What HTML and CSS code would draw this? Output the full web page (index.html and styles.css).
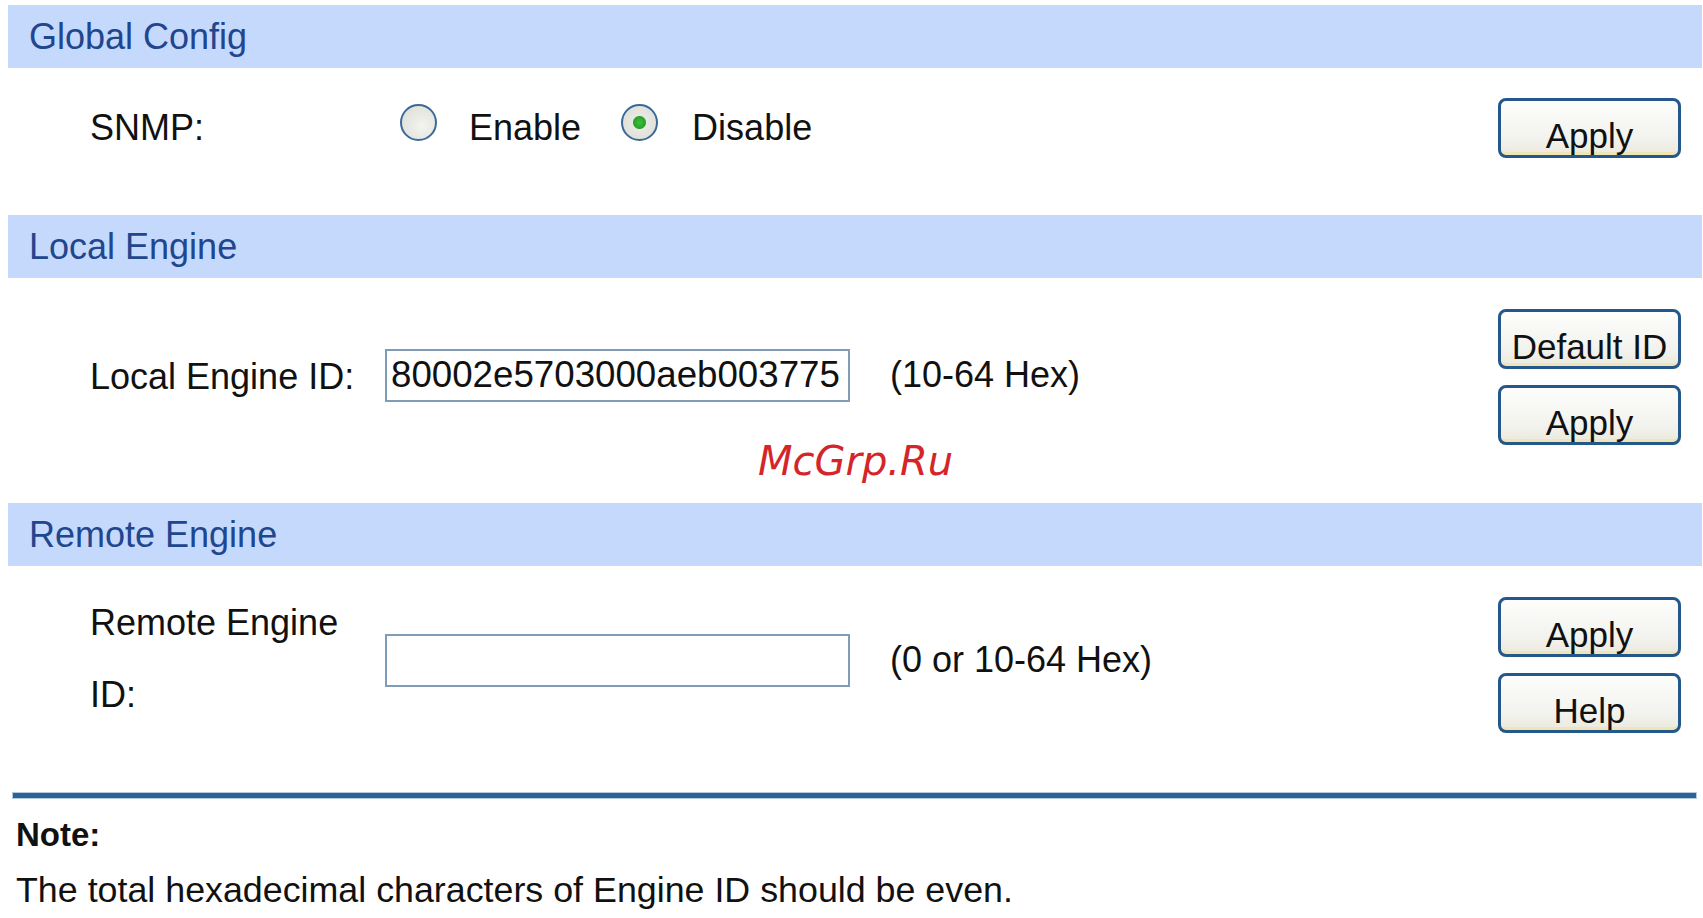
FILE: index.html
```html
<!DOCTYPE html>
<html lang="en">

<head>
  <meta charset="UTF-8">
  <meta name="viewport" content="width=device-width, initial-scale=1.0">
  <title>SNMP Config</title>
  <link rel="stylesheet" href="styles.css">
</head>

<body>
  <div class="page">
    <div class="bar">Global Config</div>
    <div class="row row-global">
      <div class="label">SNMP:</div>
      <div class="radios">
        <input type="radio" name="snmp" id="snmpOn">
        <label for="snmpOn">Enable</label>
        <input type="radio" name="snmp" id="snmpOff" checked>
        <label for="snmpOff">Disable</label>
      </div>
      <div class="buttons">
        <button>Apply</button>
      </div>
    </div>

    <div class="bar">Local Engine</div>
    <div class="row row-local">
      <div class="label">Local Engine ID:</div>
      <input type="text" class="field" id="localId" value="80002e5703000aeb003775">
      <div class="hint">(10-64 Hex)</div>
      <div class="buttons">
        <button>Default ID</button>
        <button>Apply</button>
      </div>
    </div>

    <div class="bar">Remote Engine</div>
    <div class="row row-remote">
      <div class="label label-wrap">Remote Engine<br>ID:</div>
      <input type="text" class="field" id="remoteId">
      <div class="hint">(0 or 10-64 Hex)</div>
      <div class="buttons">
        <button>Apply</button>
        <button>Help</button>
      </div>
    </div>

    <div class="divider"></div>
    <div class="note">
      <p class="note-title">Note:</p>
      <p class="note-text">The total hexadecimal characters of Engine ID should be even.</p>
    </div>
  </div>
  <div class="watermark">McGrp.Ru</div>
</body>

</html>
```

FILE: styles.css
```css
body {
  margin: 0;
  background-color: white;
  font-family: 'Liberation Sans', Arial, sans-serif;
  font-size: 36px;
  color: #111;
}

.page {
  padding: 5px 1px 0 8px;
}

.bar {
  height: 63px;
  line-height: 63px;
  padding-left: 21px;
  background-color: #c5d9fc;
  color: #22468e;
}

.row {
  display: flex;
  align-items: center;
  padding: 31px 21px 0 82px;
}
.row-global {
  padding-top: 30px;
  padding-bottom: 57px;
}
.row-local {
  padding-bottom: 58px;
}
.row-local .field,
.row-local .hint {
  margin-bottom: 4px;
}
.row-remote .field,
.row-remote .hint {
  margin-bottom: 10px;
}

.label {
  width: 295px;
  flex-shrink: 0;
}
.label-wrap {
  line-height: 72px;
  margin-top: -12px;
}

.radios {
  display: flex;
  align-items: center;
}
.radios label {
  margin: 0 40px 0 32px;
}
.radios label:last-child {
  margin-left: 34px;
}

input[type=radio] {
  appearance: none;
  -webkit-appearance: none;
  width: 37px;
  height: 37px;
  margin: 0 0 12px 15px;
  border: 2px solid #3a6a9c;
  border-radius: 50%;
  background: radial-gradient(circle at 60% 60%, #f4f4f0 0%, #e3e3dc 70%, #d6d6ce 100%);
  box-sizing: border-box;
}
input[type=radio] + label + input[type=radio] {
  margin-left: 0;
}
input[type=radio]:checked {
  background: radial-gradient(circle, #3cc03c 0, #2b9f2b 6px, #e9e9e3 7px, #dcdcd4 100%);
}

.field {
  width: 465px;
  height: 53px;
  box-sizing: border-box;
  border: 2px solid #7f9db9;
  padding: 0 4px;
  font-family: inherit;
  font-size: 36.7px;
  color: #111;
  flex-shrink: 0;
}

.hint {
  margin-left: 40px;
}

.buttons {
  margin-left: auto;
  display: flex;
  flex-direction: column;
  gap: 16px;
}

button {
  width: 183px;
  height: 60px;
  padding: 16px 0 0 0;
  border: 3px solid #24578c;
  border-radius: 8px;
  background: linear-gradient(#fdfdfc, #f2f2ee 70%, #ece9dc);
  box-shadow: inset 0 -6px 0 -3px #efe6b8;
  font-family: inherit;
  font-size: 35px;
  line-height: 36px;
  color: #111;
}

.divider {
  height: 5px;
  margin: 60px 6px 0 5px;
  background-color: #2b6494;
  box-shadow: 0 0 0 1px #b3cbe0;
}

.note {
  padding: 17px 0 0 8px;
}
.note p {
  margin: 0;
}
.note-title {
  font-weight: bold;
  font-size: 33px;
  line-height: 40px;
}
.note-text {
  margin-top: 13px !important;
  font-size: 35.8px;
  line-height: 44px;
}

.watermark {
  position: absolute;
  left: 758px;
  top: 441px;
  font-family: 'DejaVu Sans', sans-serif;
  font-style: italic;
  font-size: 40px;
  line-height: 40px;
  color: #d4252b;
}
```
